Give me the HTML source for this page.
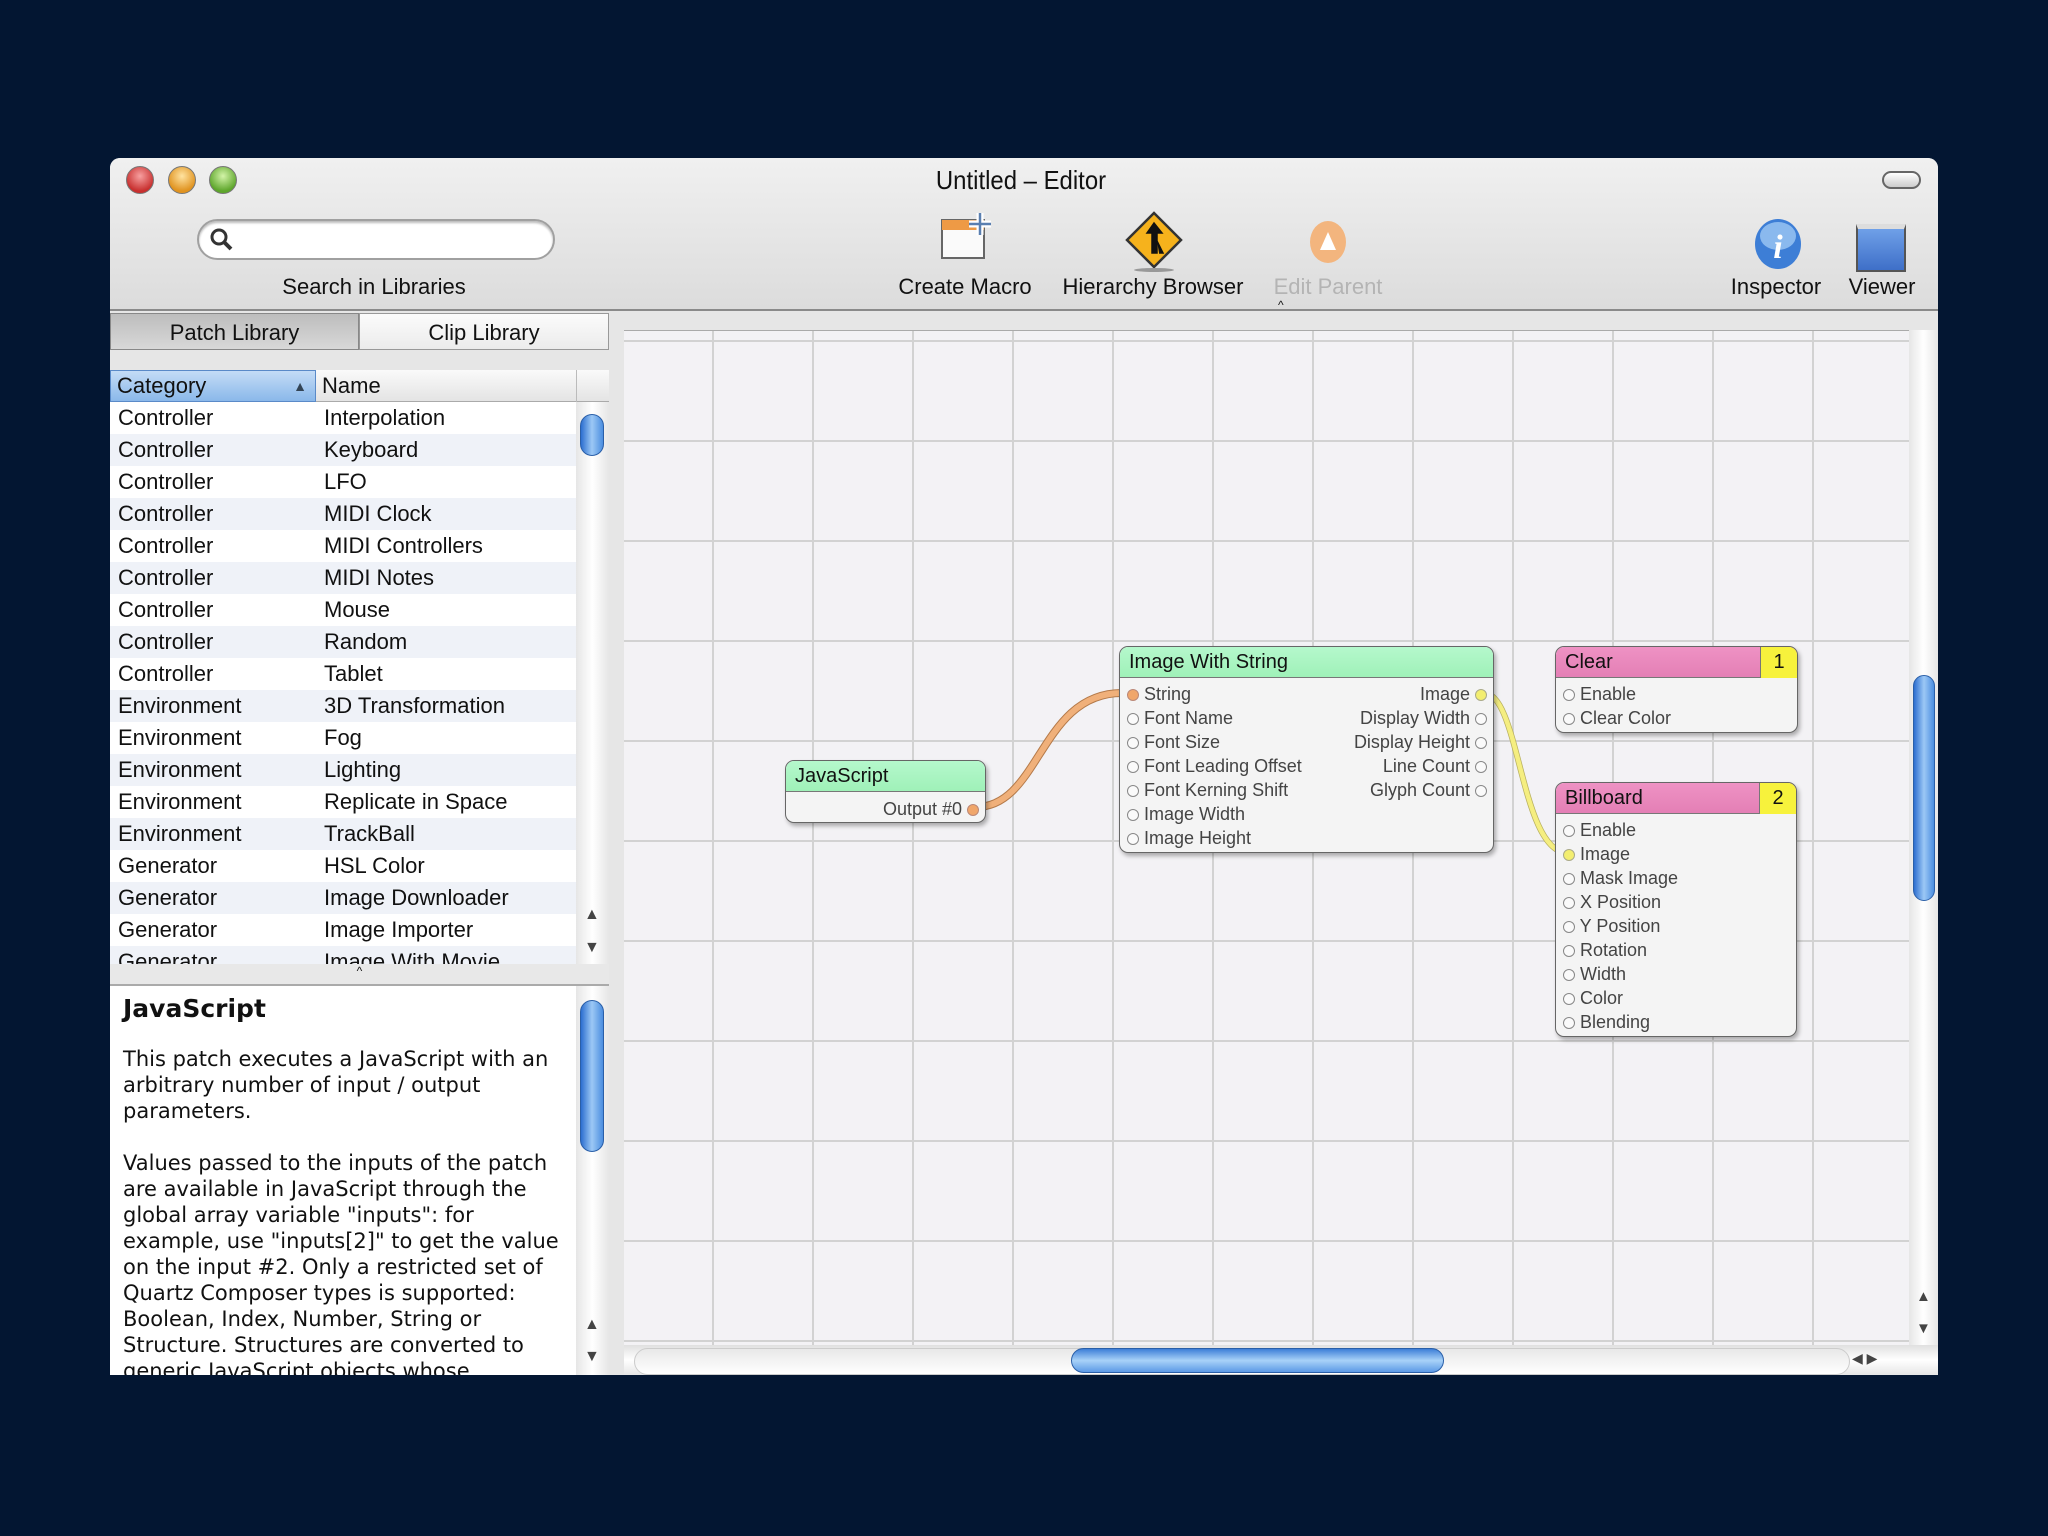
<!DOCTYPE html>
<html><head><meta charset="utf-8"><style>
*{margin:0;padding:0;box-sizing:border-box}
body{width:2048px;height:1536px;background:#031632;position:relative;overflow:hidden;font-family:"Liberation Sans",sans-serif;color:#111}
.a{position:absolute}
#win{left:110px;top:158px;width:1828px;height:1217px;background:#e6e6e6;border-radius:10px 10px 0 0;overflow:hidden}
#tb{left:0;top:0;width:1828px;height:153px;background:linear-gradient(#f0f0f0,#dcdcdc);border-bottom:2px solid #8a8a8a}
.tl{width:28px;height:28px;border-radius:50%;top:8px;border:1px solid #777}
.lbl{font-size:22px;top:116px;white-space:nowrap;transform:translateX(-50%)}
.row{position:absolute;left:0;width:466px;height:32px;font-size:22px;line-height:32px}
.row span{position:absolute}
.row .c{left:8px}.row .n{left:214px}
.node{position:absolute;background:#f4f4f4;border:1.5px solid #666;border-radius:9px;box-shadow:2px 3px 4px rgba(0,0,0,.3);overflow:hidden;font-size:18px;color:#444}
.hd{height:31px;line-height:31px;padding-left:9px;font-size:20px;color:#111;border-bottom:1px solid #777}
.g{background:linear-gradient(#b5f8cc,#9ff1b8)}
.p{background:linear-gradient(#ee92c4,#e47fb5)}
.num{position:absolute;right:0;top:0;width:37px;height:31px;background:#f7f23c;border-left:1px solid #777;text-align:center;line-height:31px;color:#111;font-size:20px}
.pt{position:absolute;height:24px;line-height:24px;white-space:nowrap}
.pt i{display:inline-block;width:12px;height:12px;border-radius:50%;border:1.3px solid #888;vertical-align:-1px;background:#fafafa}
.pt i.o{background:#f0a66a;border-color:#b87}
.pt i.y{background:#f3ee70;border-color:#aa8}
.sb{background:linear-gradient(90deg,#e6e6e6,#fff,#e6e6e6)}
.th{background:linear-gradient(90deg,#2d6fd0,#9cc8f5,#4b8ee0);border-radius:14px;border:1px solid #2a5fa8}
</style></head><body>
<div id="win" class="a">
 <div id="tb" class="a">
  <div class="a tl" style="left:16px;background:radial-gradient(circle at 50% 35%,#f7a0a0,#c8302f 70%)"></div>
  <div class="a tl" style="left:58px;background:radial-gradient(circle at 50% 35%,#ffe3a0,#e09320 70%)"></div>
  <div class="a tl" style="left:99px;background:radial-gradient(circle at 50% 35%,#d3f4a8,#5ea62c 70%)"></div>
  <div class="a" style="left:911px;top:7px;font-size:26px;white-space:nowrap;transform:translateX(-50%) scaleX(0.92)">Untitled – Editor</div>
  <div class="a" style="left:1772px;top:13px;width:39px;height:18px;border:2px solid #666;border-radius:9px;background:linear-gradient(#fff,#ccc)"></div>
  <div class="a" style="left:87px;top:61px;width:358px;height:41px;border-radius:21px;background:#fff;border:2px solid #a0a0a0;box-shadow:inset 0 2px 2px #bbb"></div>
  <svg class="a" style="left:98px;top:68px" width="28" height="28"><circle cx="11" cy="11" r="7" fill="none" stroke="#333" stroke-width="3"/><line x1="16" y1="16" x2="23" y2="23" stroke="#333" stroke-width="4"/></svg>
  <div class="a lbl" style="left:264px">Search in Libraries</div>
  <svg class="a" style="left:830px;top:52px" width="56" height="54"><rect x="2" y="10" width="42" height="38" fill="#fafafa" stroke="#666" stroke-width="2"/><rect x="2" y="10" width="42" height="10" fill="#ee9a45"/><path d="M40 3v22M29 14h22" stroke="#fff" stroke-width="7"/><path d="M40 3v22M29 14h22" stroke="#5a7fb0" stroke-width="2.5"/></svg>
  <div class="a lbl" style="left:855px">Create Macro</div>
  <svg class="a" style="left:1015px;top:53px" width="58" height="62"><path d="M29 2 L56 29 L29 56 L2 29Z" fill="#f6b21c" stroke="#333" stroke-width="2.5"/><path d="M29 12 L22 22h5v20h5V22h5Z M32 30 L38 42h-4" fill="#111" stroke="#111" stroke-width="1.5"/><ellipse cx="29" cy="59" rx="20" ry="2" fill="#999"/></svg>
  <div class="a lbl" style="left:1043px">Hierarchy Browser</div>
  <svg class="a" style="left:1199px;top:62px" width="40" height="44"><ellipse cx="19" cy="22" rx="18" ry="21" fill="#f3b57e"/><path d="M19 12 L27 30 H11Z" fill="#fff"/></svg>
  <div class="a lbl" style="left:1218px;color:#b4b4b4">Edit Parent</div>
  <svg class="a" style="left:1643px;top:60px" width="50" height="52"><ellipse cx="25" cy="26" rx="23" ry="25" fill="#3d7ed6"/><ellipse cx="25" cy="18" rx="18" ry="14" fill="#8ab9ee"/><text x="25" y="40" font-family="Liberation Serif" font-style="italic" font-weight="bold" font-size="34" fill="#fff" text-anchor="middle">i</text></svg>
  <div class="a lbl" style="left:1666px">Inspector</div>
  <div class="a" style="left:1746px;top:66px;width:50px;height:48px;border:2px solid #555;background:linear-gradient(#6fa0e8,#3e6fc8);border-top:5px solid #ddd"></div>
  <div class="a lbl" style="left:1772px">Viewer</div>
  <div class="a" style="left:1168px;top:140px;font-size:12px">^</div>
 </div>
 <div class="a" style="left:0;top:155px;width:249px;height:37px;background:linear-gradient(#bdbdbd,#d8d8d8);border:1px solid #888;text-align:center;line-height:37px;font-size:22px">Patch Library</div>
 <div class="a" style="left:249px;top:155px;width:250px;height:37px;background:linear-gradient(#fbfbfb,#ececec);border:1px solid #999;text-align:center;line-height:37px;font-size:22px">Clip Library</div>
 <div class="a" style="left:0;top:212px;width:499px;height:594px;background:#fff;overflow:hidden">
  <div class="a" style="left:0;top:0;width:499px;height:32px;background:linear-gradient(#fafafa,#e4e4e4);border-bottom:1px solid #aaa"></div>
  <div class="a" style="left:0;top:0;width:206px;height:32px;background:linear-gradient(#c4dcf6,#8ab8ea);border:1px solid #5a8ac8;font-size:22px;line-height:30px;padding-left:6px">Category<span style="position:absolute;right:8px;font-size:14px;color:#345">▲</span></div>
  <div class="a" style="left:212px;top:0;font-size:22px;line-height:32px">Name</div>
  <div class="a" style="left:466px;top:0;width:1px;height:32px;background:#bbb"></div>
  <div class="a" style="left:0;top:32px;width:466px;height:562px">
   <div class="row" style="top:0"><span class="c">Controller</span><span class="n">Interpolation</span></div>
   <div class="row" style="top:32px;background:#eff2f8"><span class="c">Controller</span><span class="n">Keyboard</span></div>
   <div class="row" style="top:64px"><span class="c">Controller</span><span class="n">LFO</span></div>
   <div class="row" style="top:96px;background:#eff2f8"><span class="c">Controller</span><span class="n">MIDI Clock</span></div>
   <div class="row" style="top:128px"><span class="c">Controller</span><span class="n">MIDI Controllers</span></div>
   <div class="row" style="top:160px;background:#eff2f8"><span class="c">Controller</span><span class="n">MIDI Notes</span></div>
   <div class="row" style="top:192px"><span class="c">Controller</span><span class="n">Mouse</span></div>
   <div class="row" style="top:224px;background:#eff2f8"><span class="c">Controller</span><span class="n">Random</span></div>
   <div class="row" style="top:256px"><span class="c">Controller</span><span class="n">Tablet</span></div>
   <div class="row" style="top:288px;background:#eff2f8"><span class="c">Environment</span><span class="n">3D Transformation</span></div>
   <div class="row" style="top:320px"><span class="c">Environment</span><span class="n">Fog</span></div>
   <div class="row" style="top:352px;background:#eff2f8"><span class="c">Environment</span><span class="n">Lighting</span></div>
   <div class="row" style="top:384px"><span class="c">Environment</span><span class="n">Replicate in Space</span></div>
   <div class="row" style="top:416px;background:#eff2f8"><span class="c">Environment</span><span class="n">TrackBall</span></div>
   <div class="row" style="top:448px"><span class="c">Generator</span><span class="n">HSL Color</span></div>
   <div class="row" style="top:480px;background:#eff2f8"><span class="c">Generator</span><span class="n">Image Downloader</span></div>
   <div class="row" style="top:512px"><span class="c">Generator</span><span class="n">Image Importer</span></div>
   <div class="row" style="top:544px;background:#eff2f8"><span class="c">Generator</span><span class="n">Image With Movie</span></div>
  </div>
  <div class="a sb" style="left:466px;top:32px;width:33px;height:562px"></div>
  <div class="a th" style="left:470px;top:44px;width:24px;height:42px"></div>
  <div class="a" style="left:474px;top:536px;font-size:16px;color:#444">▲</div>
  <div class="a" style="left:474px;top:569px;font-size:16px;color:#444">▼</div>
 </div>
 <div class="a" style="left:0;top:806px;width:499px;height:22px;background:#e8e8e8;border-bottom:2px solid #aaa;text-align:center;font-size:12px">^</div>
 <div class="a" style="left:0;top:828px;width:499px;height:389px;background:#fff;overflow:hidden">
  <div class="a" style="left:13px;top:8px;font-family:'DejaVu Sans',sans-serif;font-weight:bold;font-size:25px">JavaScript</div>
  <div class="a" style="left:13px;top:60px;width:452px;font-family:'DejaVu Sans',sans-serif;font-size:21px;line-height:26px">This patch executes a JavaScript with an arbitrary number of input / output parameters.<br><br>Values passed to the inputs of the patch are available in JavaScript through the global array variable "inputs": for example, use "inputs[2]" to get the value on the input #2. Only a restricted set of Quartz Composer types is supported: Boolean, Index, Number, String or Structure. Structures are converted to generic JavaScript objects whose</div>
  <div class="a sb" style="left:466px;top:0;width:33px;height:389px"></div>
  <div class="a th" style="left:470px;top:14px;width:24px;height:152px"></div>
  <div class="a" style="left:474px;top:330px;font-size:16px;color:#444">▲</div>
  <div class="a" style="left:474px;top:362px;font-size:16px;color:#444">▼</div>
 </div>
 <div class="a" style="left:514px;top:172px;width:1285px;height:1015px;background-color:#f3f2f5;background-image:linear-gradient(to right,#d2d2d2 2px,transparent 2px),linear-gradient(to bottom,#d2d2d2 2px,transparent 2px);background-size:100px 100px;background-position:88px 9px;border-top:1px solid #aaa"></div>
 <div class="a sb" style="left:1799px;top:172px;width:29px;height:1015px"></div>
 <div class="a th" style="left:1803px;top:517px;width:22px;height:226px"></div>
 <div class="a" style="left:1806px;top:1130px;font-size:15px;color:#444">▲</div>
 <div class="a" style="left:1806px;top:1162px;font-size:15px;color:#444">▼</div>
 <div class="a" style="left:514px;top:1187px;width:1314px;height:30px;background:linear-gradient(#e0e0e0,#fff,#e6e6e6)"></div>
 <div class="a" style="left:524px;top:1190px;width:1216px;height:27px;border-radius:14px;background:linear-gradient(#e8e8e8,#fff);border:1px solid #ccc"></div>
 <div class="a th" style="left:961px;top:1190px;width:373px;height:25px;background:linear-gradient(#3d7fd8,#a8d2f8,#5c9ae6)"></div>
 <div class="a" style="left:1742px;top:1192px;font-size:14px;color:#444">◀ ▶</div>
 <svg class="a" style="left:0;top:0" width="1828" height="1217">
  <path d="M866 649 C930 649 930 535 1012 535" fill="none" stroke="#b47a4a" stroke-width="8"/>
  <path d="M866 649 C930 649 930 535 1012 535" fill="none" stroke="#f0b07a" stroke-width="6"/>
  <path d="M1374 535 C1410 535 1410 695 1458 695" fill="none" stroke="#b8b060" stroke-width="6"/>
  <path d="M1374 535 C1410 535 1410 695 1458 695" fill="none" stroke="#f5ee80" stroke-width="4.5"/>
 </svg>
 <div class="node" style="left:675px;top:602px;width:201px;height:63px">
  <div class="hd g">JavaScript</div>
  <div class="pt" style="right:6px;top:36px">Output #0 <i class="o"></i></div>
 </div>
 <div class="node" style="left:1009px;top:488px;width:375px;height:207px">
  <div class="hd g">Image With String</div>
  <div class="pt" style="left:7px;top:35px"><i class="o"></i> String</div>
  <div class="pt" style="left:7px;top:59px"><i></i> Font Name</div>
  <div class="pt" style="left:7px;top:83px"><i></i> Font Size</div>
  <div class="pt" style="left:7px;top:107px"><i></i> Font Leading Offset</div>
  <div class="pt" style="left:7px;top:131px"><i></i> Font Kerning Shift</div>
  <div class="pt" style="left:7px;top:155px"><i></i> Image Width</div>
  <div class="pt" style="left:7px;top:179px"><i></i> Image Height</div>
  <div class="pt" style="right:6px;top:35px">Image <i class="y"></i></div>
  <div class="pt" style="right:6px;top:59px">Display Width <i></i></div>
  <div class="pt" style="right:6px;top:83px">Display Height <i></i></div>
  <div class="pt" style="right:6px;top:107px">Line Count <i></i></div>
  <div class="pt" style="right:6px;top:131px">Glyph Count <i></i></div>
 </div>
 <div class="node" style="left:1445px;top:488px;width:243px;height:87px">
  <div class="hd p">Clear<div class="num">1</div></div>
  <div class="pt" style="left:7px;top:35px"><i></i> Enable</div>
  <div class="pt" style="left:7px;top:59px"><i></i> Clear Color</div>
 </div>
 <div class="node" style="left:1445px;top:624px;width:242px;height:255px">
  <div class="hd p">Billboard<div class="num">2</div></div>
  <div class="pt" style="left:7px;top:35px"><i></i> Enable</div>
  <div class="pt" style="left:7px;top:59px"><i class="y"></i> Image</div>
  <div class="pt" style="left:7px;top:83px"><i></i> Mask Image</div>
  <div class="pt" style="left:7px;top:107px"><i></i> X Position</div>
  <div class="pt" style="left:7px;top:131px"><i></i> Y Position</div>
  <div class="pt" style="left:7px;top:155px"><i></i> Rotation</div>
  <div class="pt" style="left:7px;top:179px"><i></i> Width</div>
  <div class="pt" style="left:7px;top:203px"><i></i> Color</div>
  <div class="pt" style="left:7px;top:227px"><i></i> Blending</div>
 </div>
</div>
</body></html>
